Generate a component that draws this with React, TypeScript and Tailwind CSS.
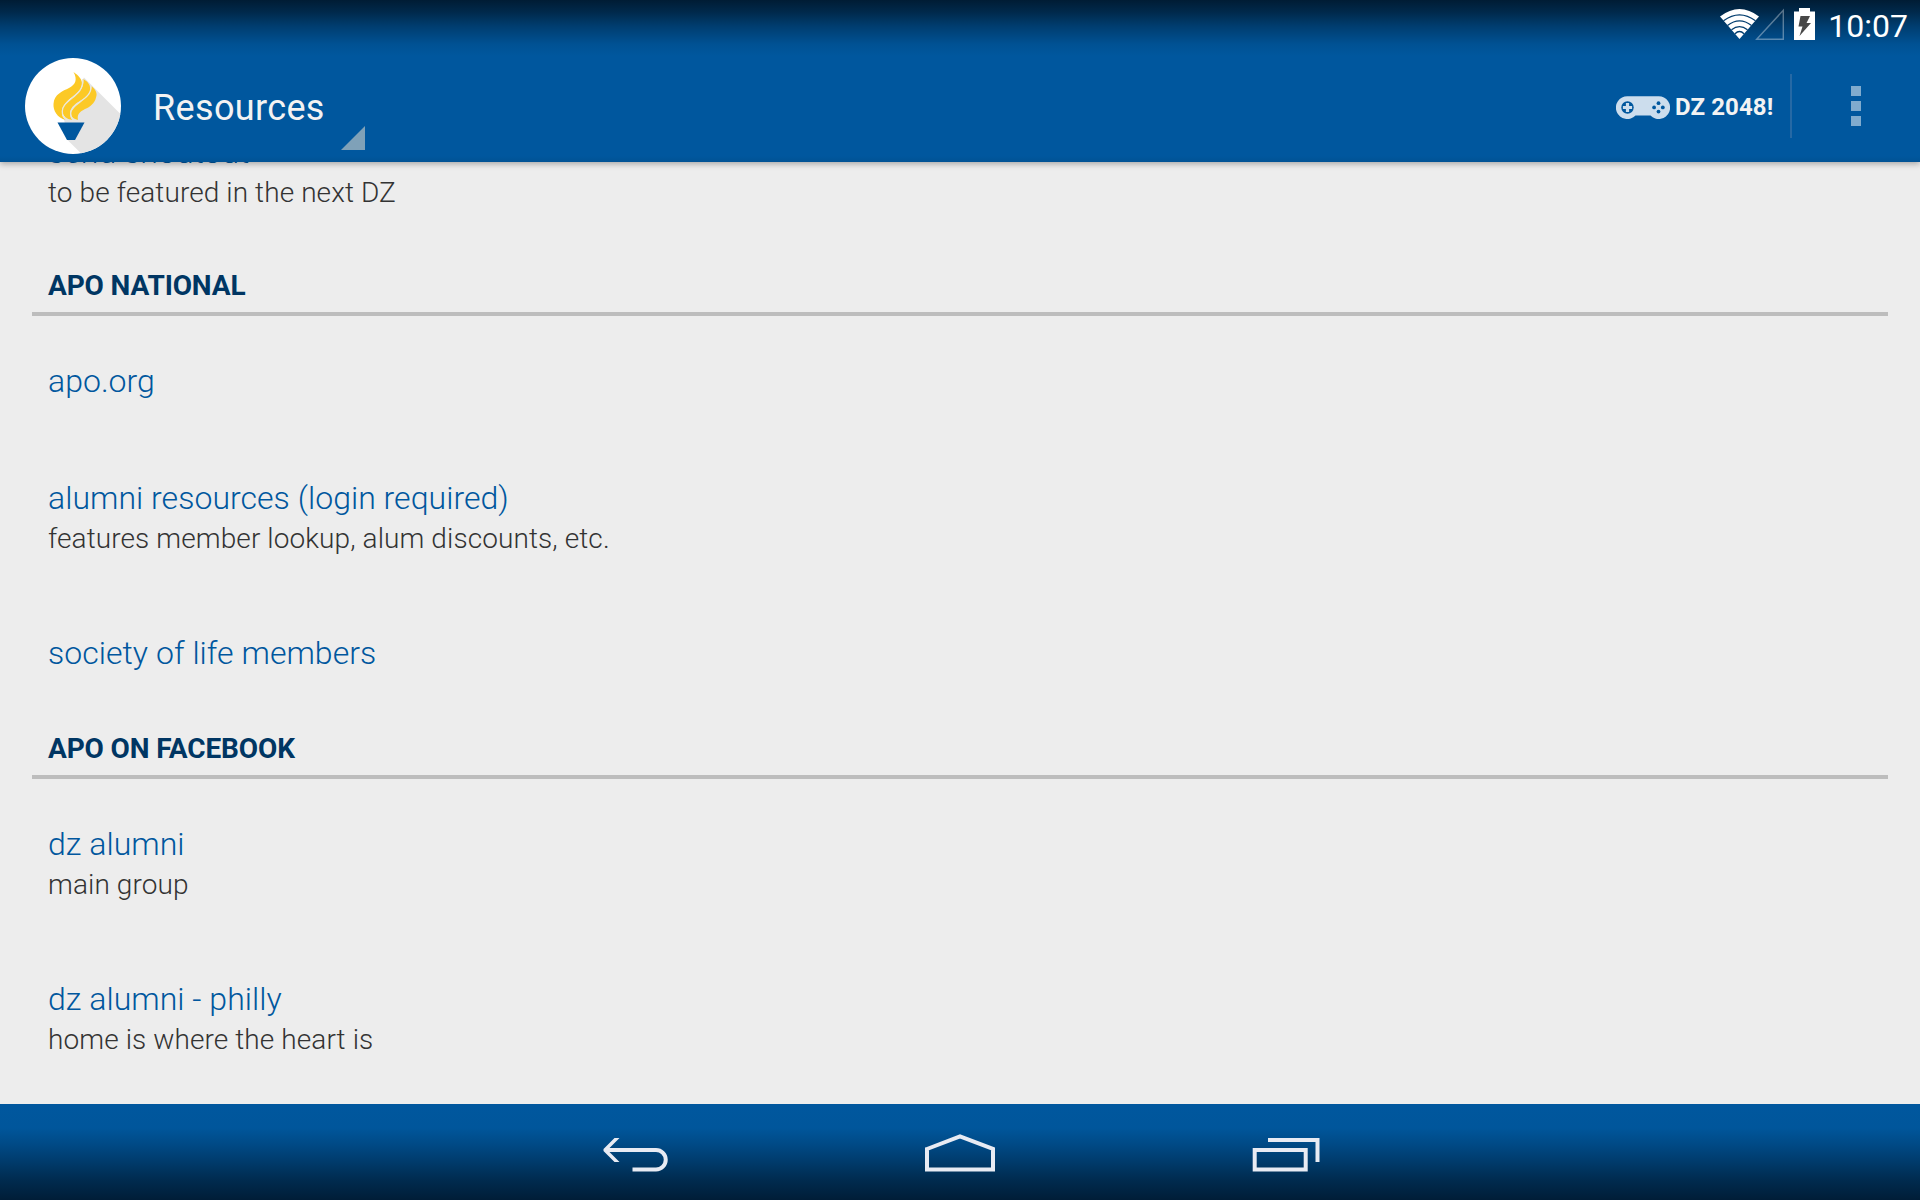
type Item = { title: string; note?: string };
type Section = { heading: string; items: Item[] };

const sections: Section[] = [
  {
    heading: "APO NATIONAL",
    items: [
      { title: "apo.org" },
      { title: "alumni resources (login required)", note: "features member lookup, alum discounts, etc." },
      { title: "society of life members" },
    ],
  },
  {
    heading: "APO ON FACEBOOK",
    items: [
      { title: "dz alumni", note: "main group" },
      { title: "dz alumni - philly", note: "home is where the heart is" },
    ],
  },
];

function Row({ title, note }: Item) {
  return (
    <li className="pt-[45px] pr-4 pb-8 pl-4">
      <div className="text-[32px] leading-[40px] font-light tracking-[0.03px] text-[#00579e]">{title}</div>
      {note && (
        <div className="h-[38px] text-[28px] leading-[41px] font-light tracking-[0.09px] text-[#333333]">{note}</div>
      )}
    </li>
  );
}

function SectionHeading({ children }: { children: string }) {
  return (
    <h2 className="h-[74px] border-b-4 border-[#bdbdbd] pt-[26px] pl-4 text-[28px] leading-[36px] font-bold tracking-[-0.14px] text-[#003663]">
      {children}
    </h2>
  );
}

function TorchLogo() {
  return (
    <svg className="size-24" viewBox="0 0 96 96">
      <defs>
        <clipPath id="disc">
          <circle cx="48" cy="48" r="48" />
        </clipPath>
      </defs>
      <circle cx="48" cy="48" r="48" fill="#fff" />
      <g clipPath="url(#disc)">
        <path d="M59 19.500 L130 90.500 V120 H81 L42.500 82 L39 61 L46 40Z" fill="#e4e4e4" />
      </g>
      <path
        d="M48.5 14 C54 18 57 21 57 26 C57 36 38 41 37 53 C36.500 57 38 60 41 62 C32 60 28 52 28.500 46 C29 36 38 33 44 30 C50 27 53 22 48.500 14Z"
        fill="#fcc926"
      />
      <path
        d="M58.500 21 C63 24 66 27 65 33 C63 42 45 44 45 56 C45 59 46.500 61 48 62 C41 61 37.500 58 37.500 53 C38 41 60 38 58.500 21Z"
        fill="#fcc926"
      />
      <path
        d="M66.500 28 C70 31 73 35 71 39.500 C70 45 65 49 60 51 C54 54 52 57 53 62 C49 61 46 59 46 55 C47 45 66 42 66.500 28Z"
        fill="#fcc926"
      />
      <path
        d="M57.500 21 C60 38 38 41 37.300 53 C37 58 40 61 43 62.500 M66 28 C67 42 46 45 45.700 55 C45.500 59 47 61 49 62.500"
        fill="none"
        stroke="#ebe7d8"
        strokeWidth="1.300"
      />
      <path d="M32.500 64.500 H59.500 L50 82 H42Z" fill="#00579e" />
    </svg>
  );
}

function Wifi() {
  return (
    <svg className="h-[30px] w-[39px]" viewBox="0 0 39 30">
      <path d="M0 7.500 Q19.500 -7.500 39 7.500 L19.500 30Z" fill="#fff" />
      <g fill="none" stroke="#003c6e" strokeWidth="1.300">
        <path d="M3.500 11.800 Q19.500 0 35.500 11.800" />
        <path d="M7.500 16.500 Q19.500 7.300 31.500 16.500" />
        <path d="M11.500 20.800 Q19.500 14.500 27.500 20.800" />
        <path d="M15 24.800 Q19.500 20.200 24 24.800" />
      </g>
    </svg>
  );
}

function Signal() {
  return (
    <svg className="h-8 w-[30px]" viewBox="0 0 30 32">
      <path d="M1.700 31.200 L28.300 2.300 V31.200Z" fill="none" stroke="#fff" strokeOpacity="0.350" strokeWidth="1.400" />
    </svg>
  );
}

function Battery() {
  return (
    <svg className="h-8 w-[21px]" viewBox="0 0 21 32">
      <path d="M0 3.500 H5 V0 H16 V3.500 H21 V32 H0Z" fill="#fff" />
      <path d="M6.500 8 H16 L12.500 15 H17 L5.500 28 L8.500 18.500 H4.500Z" fill="#484848" />
    </svg>
  );
}

function Gamepad() {
  return (
    <svg className="h-6 w-[54px]" viewBox="0 0 54 24">
      <path
        d="M11.500 0.200 H42.500 A11.400 11.400 0 1 1 34.500 19.500 H19.500 A11.400 11.400 0 1 1 11.500 0.200Z"
        fill="#ccdded"
      />
      <circle cx="11.500" cy="11.500" r="6.200" fill="#00579e" />
      <path d="M11.500 6.900 V16.100 M6.900 11.500 H16.100" stroke="#ccdded" strokeWidth="3.200" />
      <g fill="#00579e">
        <circle cx="42.500" cy="7.200" r="1.900" />
        <circle cx="42.500" cy="15.600" r="1.900" />
        <circle cx="38.100" cy="11.400" r="1.900" />
        <circle cx="46.800" cy="11.400" r="1.900" />
      </g>
    </svg>
  );
}

function Header() {
  return (
    <header className="relative z-10 h-[162px] shrink-0 bg-[#00579e] bg-[linear-gradient(to_bottom,#001c34_0px,#00294b_12px,#003d6f_26px,#005193_44px,#00579e_56px,#00579e_156px,#005294_162px)] shadow-[0_2px_6px_rgba(0,0,0,0.3)]">
      <div className="flex h-[50px] justify-end pr-3">
        <div className="mt-[9px]"><Wifi /></div>
        <div className="mt-2 -ml-[4px]"><Signal /></div>
        <div className="mt-2 ml-[9px]"><Battery /></div>
        <div className="mt-[6px] ml-[13px] text-[32px] leading-[40px] text-white">10:07</div>
      </div>
      <div className="flex h-[112px]">
        <div className="mt-2 ml-[25px]"><TorchLogo /></div>
        <div className="mt-[36px] ml-8 w-[187px] text-[36px] leading-[44px] tracking-[0.35px] text-[#f3f3f3]">Resources</div>
        <svg className="mt-[76px] ml-[1px] size-6" viewBox="0 0 24 24">
          <path d="M24 0 V24 H0Z" fill="#7fa1b8" />
        </svg>
        <div className="ml-auto flex">
          <div className="mt-[46px]"><Gamepad /></div>
          <div className="mt-[41px] ml-[5px] w-[99px] text-[24px] leading-[32px] font-bold tracking-[0.1px] whitespace-nowrap text-[#f3f3f3]">DZ 2048!</div>
          <div className="mt-6 ml-4 h-16 w-[2px] bg-[#2669a5]" />
          <div className="mt-9 mr-[59px] ml-[59px] flex flex-col gap-[5px]">
            <span className="size-[10px] bg-[#80abce]" />
            <span className="size-[10px] bg-[#80abce]" />
            <span className="size-[10px] bg-[#80abce]" />
          </div>
        </div>
      </div>
    </header>
  );
}

export default function App() {
  return (
    <div className="flex h-[1200px] w-[1920px] flex-col overflow-hidden bg-[#ededed] font-['Roboto',sans-serif]">
      <Header />

      <main className="min-h-0 flex-1 overflow-hidden px-8">
        <div className="-mt-[75px]">
          <ul><Row title="send shoutout" note="to be featured in the next DZ" /></ul>
          {sections.map((s) => (
            <section key={s.heading}>
              <SectionHeading>{s.heading}</SectionHeading>
              <ul>
                {s.items.map((item) => (
                  <Row key={item.title} {...item} />
                ))}
              </ul>
            </section>
          ))}
        </div>
      </main>

      <nav className="flex h-24 shrink-0 justify-center gap-[252px] bg-[linear-gradient(to_bottom,#00579e_0px,#00569b_24px,#004a86_40px,#003968_60px,#002b4f_76px,#001d37_96px)] pt-4">
        <svg className="size-[72px]" viewBox="0 0 72 72">
          <path
            d="M14.500 18 H19.500 L9.500 28 H56 A11.750 11.750 0 0 1 56 51.500 H32.500 V47.500 H56 A7.750 7.750 0 0 0 56 32 H9.500 L19.500 42 H14.500 L3.500 31 V29Z"
            fill="#e8ebf3"
          />
        </svg>
        <svg className="size-[72px]" viewBox="0 0 72 72">
          <path d="M3 29 L36 16.500 L69 29 V49.500 H3Z" fill="none" stroke="#e8ebf3" strokeWidth="4" />
        </svg>
        <svg className="size-[72px]" viewBox="0 0 72 72">
          <path d="M6.700 30 H57.700 V49.500 H6.700Z M20 20 H69.500 V42" fill="none" stroke="#e8ebf3" strokeWidth="4" />
        </svg>
      </nav>
    </div>
  );
}
